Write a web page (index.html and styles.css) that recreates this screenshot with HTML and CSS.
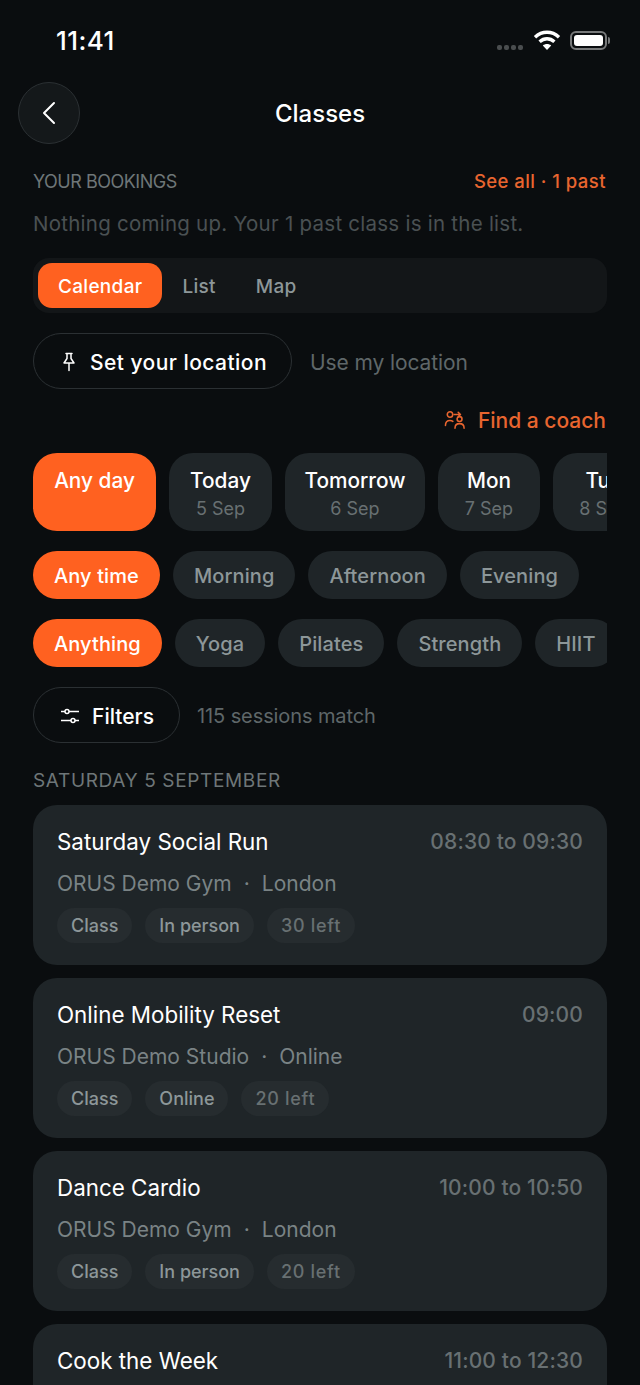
FILE: index.html
```html
<!DOCTYPE html>
<html>

<head>
  <title>Classes</title>
  <link rel="stylesheet" href="styles.css">
</head>

<body>
  <!-- Status Bar -->
  <div class="status-bar">
    <span class="clock">11:41</span>
    <div class="status-icons">
      <div class="signal"><i></i><i></i><i></i><i></i></div>
      <svg class="wifi" width="28" height="22" viewBox="0 0 28 22" fill="none" stroke="#fff" stroke-width="3.4">
        <path d="M2 8.2C9 1.6 19 1.6 26 8.2" />
        <path d="M6.6 12.8C11 8.8 17 8.8 21.4 12.8" />
        <path d="M14 21l-4.2-4.4c2.4-2 6-2 8.4 0z" fill="#fff" stroke="none" />
      </svg>
      <div class="battery"><div class="battery-fill"></div></div>
      <div class="battery-cap"></div>
    </div>
  </div>

  <!-- Header -->
  <div class="header">
    <div class="back-btn">
      <svg width="16" height="26" viewBox="0 0 16 26" fill="none" stroke="#fff" stroke-width="2" stroke-linecap="round" stroke-linejoin="round">
        <path d="M13 3L3 13l10 10" />
      </svg>
    </div>
    <h1>Classes</h1>
  </div>

  <div class="content">
    <!-- Bookings -->
    <div class="bookings-row">
      <span class="section-label">YOUR BOOKINGS</span>
      <span class="see-all">See all · 1 past</span>
    </div>
    <p class="empty-note">Nothing coming up. Your 1 past class is in the list.</p>

    <div class="segmented">
      <span class="segment active">Calendar</span>
      <span class="segment">List</span>
      <span class="segment">Map</span>
    </div>

    <div class="location-row">
      <div class="outline-btn location-btn">
        <svg width="14" height="20" viewBox="0 0 14 20" fill="none" stroke="#fff" stroke-width="1.5" stroke-linejoin="round" stroke-linecap="round">
          <path d="M4 1.500h6M5 1.500v5L2 11h10L9 6.500v-5M7 11v7.500" />
        </svg>
        Set your location
      </div>
      <span class="muted-text">Use my location</span>
    </div>

    <div class="coach-row">
      <svg width="22" height="20" viewBox="0 0 24 22" fill="none" stroke="#e8652f" stroke-width="1.7" stroke-linecap="round" stroke-linejoin="round">
        <circle cx="6.500" cy="5" r="3" />
        <circle cx="17" cy="10" r="2.700" />
        <path d="M1.500 17c0-3.500 2-5.500 5-5.500 1.300 0 2.400.4 3.200 1M12 20c0-3 2-5 5-5s5 2 5 5M11 5h7M15.500 2.500L18 5l-2.500 2.500" />
      </svg>
      Find a coach
    </div>

    <!-- Day picker -->
    <div class="scroll-row day-row">
      <div class="day-card active"><span class="day-name">Any day</span></div>
      <div class="day-card today"><span class="day-name">Today</span><span class="day-date">5 Sep</span></div>
      <div class="day-card"><span class="day-name">Tomorrow</span><span class="day-date">6 Sep</span></div>
      <div class="day-card"><span class="day-name">Mon</span><span class="day-date">7 Sep</span></div>
      <div class="day-card"><span class="day-name">Tue</span><span class="day-date">8 Sep</span></div>
    </div>

    <div class="scroll-row chip-row">
      <span class="chip active">Any time</span>
      <span class="chip">Morning</span>
      <span class="chip">Afternoon</span>
      <span class="chip">Evening</span>
    </div>

    <div class="scroll-row chip-row">
      <span class="chip active">Anything</span>
      <span class="chip">Yoga</span>
      <span class="chip">Pilates</span>
      <span class="chip">Strength</span>
      <span class="chip">HIIT</span>
    </div>

    <div class="filters-row">
      <div class="outline-btn filters-btn">
        <svg width="20" height="18" viewBox="0 0 20 18" fill="none" stroke="#fff" stroke-width="1.5">
          <path d="M1 4.500h4M9 4.500h10M1 13.500h10M15 13.500h4" />
          <circle cx="7" cy="4.500" r="2" />
          <circle cx="13" cy="13.500" r="2" />
        </svg>
        Filters
      </div>
      <span class="muted-text match-count">115 sessions match</span>
    </div>

    <div class="section-label day-heading">SATURDAY 5 SEPTEMBER</div>

    <!-- Class list -->
    <div class="class-list">
      <div class="class-card">
        <div class="class-top">
          <span class="class-title">Saturday Social Run</span>
          <span class="class-time">08:30 to 09:30</span>
        </div>
        <div class="class-venue"><span>ORUS Demo Gym</span><span>·</span><span>London</span></div>
        <div class="tags">
          <span class="tag">Class</span>
          <span class="tag">In person</span>
          <span class="tag dim">30 left</span>
        </div>
      </div>

      <div class="class-card">
        <div class="class-top">
          <span class="class-title">Online Mobility Reset</span>
          <span class="class-time">09:00</span>
        </div>
        <div class="class-venue"><span>ORUS Demo Studio</span><span>·</span><span>Online</span></div>
        <div class="tags">
          <span class="tag">Class</span>
          <span class="tag">Online</span>
          <span class="tag dim">20 left</span>
        </div>
      </div>

      <div class="class-card">
        <div class="class-top">
          <span class="class-title">Dance Cardio</span>
          <span class="class-time">10:00 to 10:50</span>
        </div>
        <div class="class-venue"><span>ORUS Demo Gym</span><span>·</span><span>London</span></div>
        <div class="tags">
          <span class="tag">Class</span>
          <span class="tag">In person</span>
          <span class="tag dim">20 left</span>
        </div>
      </div>

      <div class="class-card">
        <div class="class-top">
          <span class="class-title">Cook the Week</span>
          <span class="class-time">11:00 to 12:30</span>
        </div>
      </div>
    </div>
  </div>
</body>

</html>
```

FILE: styles.css
```css
/* Global Styles */
html,
body {
  height: 100%;
}

body {
  margin: 0;
  overflow: hidden;
  background-color: #0A0D0F;
  color: #FFFFFF;
  font-family: Inter, "Liberation Sans", sans-serif;
}

/* Status Bar CSS */
.status-bar {
  height: 82px;
  box-sizing: border-box;
  padding: 25px 30px 0 56px;
  display: flex;
  justify-content: space-between;
  align-items: flex-start;
}

.clock {
  font-size: 26px;
  line-height: 32px;
  font-weight: 500;
  letter-spacing: 0.4px;
}

.status-icons {
  display: flex;
  align-items: center;
  height: 30px;
}

.signal {
  display: flex;
  gap: 2px;
  margin: 14px 10px 0 0;
}

.signal i {
  width: 5px;
  height: 5px;
  border-radius: 2px;
  background-color: #4A4D4F;
}

.wifi {
  margin-right: 9px;
}

.battery {
  width: 37px;
  height: 19px;
  box-sizing: border-box;
  padding: 2px;
  border: 2px solid #77797A;
  border-radius: 6px;
}

.battery-fill {
  height: 100%;
  background-color: #FFFFFF;
  border-radius: 3px;
}

.battery-cap {
  width: 2px;
  height: 7px;
  margin-left: 1px;
  background-color: #77797A;
  border-radius: 0 2px 2px 0;
}

/* Header CSS */
.header {
  height: 62px;
  padding: 0 18px;
  display: flex;
  align-items: center;
}

.back-btn {
  width: 60px;
  height: 60px;
  display: flex;
  align-items: center;
  justify-content: center;
  background-color: #14181A;
  border: 1px solid #2B3033;
  border-radius: 50%;
}

.header h1 {
  flex: 1;
  margin: 0 62px 0 0;
  text-align: center;
  font-size: 24px;
  font-weight: 500;
}

.content {
  padding: 0 33px;
}

/* Bookings CSS */
.bookings-row {
  margin-top: 23px;
  display: flex;
  justify-content: space-between;
  align-items: center;
  height: 28px;
}

.section-label {
  font-size: 18px;
  color: #6E7678;
}

.bookings-row .section-label {
  letter-spacing: -0.5px;
}

.see-all {
  margin-right: 1px;
  font-size: 18.500px;
  font-weight: 500;
  letter-spacing: 0.45px;
  color: #E8652F;
}

.empty-note {
  margin: 14px 0 0;
  font-size: 20.500px;
  line-height: 30px;
  letter-spacing: 0.25px;
  color: #4A5153;
}

.segmented {
  margin-top: 19px;
  height: 55px;
  box-sizing: border-box;
  padding: 5px;
  display: flex;
  background-color: #131618;
  border-radius: 16px;
}

.segment {
  padding: 2px 20px 0;
  display: flex;
  align-items: center;
  font-size: 19px;
  font-weight: 500;
  letter-spacing: 0.3px;
  color: #8D9799;
  border-radius: 14px;
}

.segment.active {
  background-color: #FF6120;
  color: #FFFFFF;
}

/* Location CSS */
.location-row {
  margin-top: 20px;
  display: flex;
  align-items: center;
  gap: 18px;
}

.outline-btn {
  height: 56px;
  box-sizing: border-box;
  padding-top: 2px;
  display: flex;
  align-items: center;
  border: 1px solid #2B3033;
  border-radius: 28px;
  font-size: 21px;
  font-weight: 500;
}

.location-btn {
  width: 259px;
  padding-left: 28px;
  gap: 14px;
  letter-spacing: 0.45px;
}

.muted-text {
  padding-top: 2px;
  font-size: 21px;
  letter-spacing: -0.1px;
  color: #5F6769;
}

.coach-row {
  margin-top: 16px;
  height: 30px;
  display: flex;
  justify-content: flex-end;
  align-items: center;
  gap: 12px;
  padding-right: 1px;
  font-size: 21px;
  font-weight: 500;
  color: #E8652F;
}

/* Day and chip rows */
.scroll-row {
  display: flex;
  gap: 13px;
  overflow: hidden;
}

.day-row {
  margin-top: 18px;
}

.day-card {
  flex: none;
  min-width: 102px;
  height: 78px;
  box-sizing: border-box;
  padding: 13px 19.500px 0;
  display: flex;
  flex-direction: column;
  align-items: center;
  background-color: #1F2528;
  border-radius: 24px;
}

.day-card.today {
  min-width: 103px;
}

.day-card.active {
  min-width: 123px;
  background-color: #FF6120;
}

.day-name {
  font-size: 20.800px;
  line-height: 29px;
  font-weight: 500;
}

.day-date {
  margin-top: 1px;
  font-size: 18px;
  line-height: 26px;
  color: #687072;
}

.chip-row {
  margin-top: 20px;
}

.chip {
  flex: none;
  height: 48px;
  box-sizing: border-box;
  padding: 2px 21px 0;
  display: flex;
  align-items: center;
  background-color: #1F2528;
  border-radius: 24px;
  font-size: 20px;
  font-weight: 500;
  letter-spacing: 0.1px;
  color: #8D9799;
}

.chip.active {
  background-color: #FF6120;
  color: #FFFFFF;
}

/* Filters CSS */
.filters-row {
  margin-top: 20px;
  display: flex;
  align-items: center;
  gap: 17px;
}

.filters-btn {
  width: 147px;
  padding-left: 26px;
  gap: 12px;
}

.match-count {
  font-size: 20px;
}

.day-heading {
  margin-top: 24px;
  font-size: 19px;
  line-height: 28px;
  letter-spacing: 0.65px;
}

/* Class Card CSS */
.class-list {
  margin-top: 10px;
  display: flex;
  flex-direction: column;
  gap: 13px;
}

.class-card {
  height: 160px;
  box-sizing: border-box;
  padding: 20px 24px 0;
  background-color: #1F2528;
  border-radius: 24px;
}

.class-top {
  display: flex;
  justify-content: space-between;
  align-items: center;
  height: 32px;
}

.class-title {
  font-size: 22.400px;
}

.class-time {
  font-size: 21px;
  font-weight: 500;
  letter-spacing: 0.15px;
  color: #687072;
}

.class-venue {
  margin-top: 12px;
  display: flex;
  gap: 12px;
  font-size: 21px;
  line-height: 30px;
  color: #7A8385;
}

.tags {
  margin-top: 9px;
  display: flex;
  gap: 13px;
}

.tag {
  height: 35px;
  padding: 0 14px;
  display: flex;
  align-items: center;
  background-color: #262C2F;
  border-radius: 18px;
  font-size: 18px;
  font-weight: 500;
  color: #8D9799;
}

.tag.dim {
  letter-spacing: 0.7px;
  color: #687072;
}
```
